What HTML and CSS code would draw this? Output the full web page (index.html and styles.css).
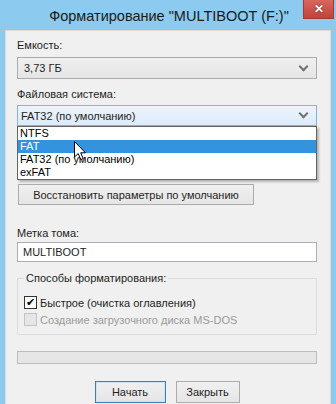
FILE: index.html
```html
<!DOCTYPE html>
<html lang="ru">
<head>
    <meta charset="UTF-8">
    <title>Форматирование</title>
    <link rel="stylesheet" href="styles.css">
</head>
<body>

<div class="window">
    <div class="titlebar">
        <span class="title">Форматирование "MULTIBOOT (F:)"</span>
        <span class="close">&#x2715;</span>
    </div>

    <div class="panel">
        <div class="label">Емкость:</div>
        <div class="combo">
            <span>3,73 ГБ</span>
            <span class="arrow"></span>
        </div>

        <div class="label">Файловая система:</div>
        <div class="combo-wrap">
            <div class="combo combo-hot">
                <span>FAT32 (по умолчанию)</span>
                <span class="arrow"></span>
            </div>
            <ul class="droplist">
                <li>NTFS</li>
                <li class="selected">FAT</li>
                <li>FAT32 (по умолчанию)</li>
                <li>exFAT</li>
            </ul>
            <svg class="cursor" width="13" height="20" viewBox="0 0 13 20">
                <path d="M0.5 0.5 L0.5 16 L4.2 12.6 L6.8 18.6 L9.2 17.6 L6.7 11.8 L11.5 11.8 Z" fill="#fff" stroke="#000" stroke-width="1"/>
            </svg>
        </div>

        <div class="btn btn-restore">Восстановить параметры по умолчанию</div>

        <div class="label label-volume">Метка тома:</div>
        <div class="textfield">MULTIBOOT</div>

        <fieldset class="group">
            <legend>Способы форматирования:</legend>
            <div class="check">
                <span class="box box-checked">&#x2714;</span>
                <span>Быстрое (очистка оглавления)</span>
            </div>
            <div class="check check-disabled">
                <span class="box"></span>
                <span>Создание загрузочного диска MS-DOS</span>
            </div>
        </fieldset>

        <div class="progress"></div>

        <div class="actions">
            <div class="btn btn-default">Начать</div>
            <div class="btn btn-close">Закрыть</div>
        </div>
    </div>
</div>

</body>
</html>
```

FILE: styles.css
```css
html, body{
    margin: 0;
    padding: 0;
}
body{
    width: 336px;
    height: 404px;
    overflow: hidden;
    font-family: "Liberation Sans", Arial, sans-serif;
    font-size: 11px;
    color: #1e1e1e;
}
.window{
    box-sizing: border-box;
    height: 404px;
    padding: 0 5px;
    background: #8ccaf0;
}
.titlebar{
    position: relative;
    height: 30px;
    display: flex;
    align-items: center;
    justify-content: center;
}
.title{
    font-size: 14.5px;
    color: #1a1a1a;
    margin-left: 2px;
    margin-top: 2px;
    white-space: nowrap;
}
.close{
    position: absolute;
    top: 0;
    right: -3px;
    width: 31px;
    height: 19px;
    background: linear-gradient(#d8675f, #c2433a);
    border: 1px solid #a23a33;
    border-top: 0;
    box-sizing: border-box;
    color: #fff;
    font-size: 12px;
    font-weight: bold;
    text-align: center;
    line-height: 18px;
    text-shadow: 0 0 2px #5a1510;
}
.panel{
    box-sizing: border-box;
    height: 374px;
    padding: 6px 13px 0 11px;
    background: #f0f0f0;
    border: 1px solid #d9d9d9;
    border-bottom: 0;
}
.label{
    line-height: 16px;
    height: 16px;
    white-space: nowrap;
}
.combo{
    box-sizing: border-box;
    height: 22px;
    margin-top: 4px;
    padding: 0 6px;
    display: flex;
    align-items: center;
    justify-content: space-between;
    border: 1px solid #acacac;
    background: linear-gradient(#f0f0f0, #e5e5e5);
}
.combo + .label{
    margin-top: 7px;
}
.combo-wrap{
    position: relative;
    margin-top: 3px;
    height: 79px;
}
.combo-wrap .combo{
    margin-top: 0;
    height: 21px;
    padding-left: 3px;
}
.combo-hot{
    border-color: #7eb4ea;
    background: linear-gradient(#ecf4fc, #dcecfc);
}
.arrow{
    width: 5px;
    height: 5px;
    margin-right: 3px;
    margin-top: -4px;
    border-right: 2px solid #707070;
    border-bottom: 2px solid #707070;
    transform: rotate(45deg);
}
.droplist{
    position: absolute;
    top: 21px;
    left: 0;
    right: 0;
    margin: 0;
    padding: 0;
    list-style: none;
    background: #fff;
    border: 1px solid #646464;
    box-shadow: 2px 2px 2px rgba(0, 0, 0, 0.25);
}
.droplist li{
    height: 13px;
    line-height: 13px;
    padding-left: 2px;
    color: #000;
    white-space: nowrap;
}
.droplist .selected{
    background: #3393df;
    color: #fff;
}
.cursor{
    position: absolute;
    left: 57px;
    top: 36px;
}
.btn{
    box-sizing: border-box;
    height: 21px;
    border: 1px solid #acacac;
    background: linear-gradient(#f0f0f0, #e5e5e5);
    display: flex;
    align-items: center;
    justify-content: center;
    white-space: nowrap;
}
.btn-restore{
    width: 236px;
    margin-left: 1px;
}
.label-volume{
    margin-top: 20px;
}
.textfield{
    box-sizing: border-box;
    height: 20px;
    margin-top: 1px;
    padding: 0 5px;
    display: flex;
    align-items: center;
    background: #fff;
    border: 1px solid #abadb3;
}
.group{
    margin: 8px 0 0;
    padding: 8px 0 11px 6px;
    border: 1px solid #dcdcdc;
    height: 44px;
}
.group legend{
    padding: 0 2px;
    margin-left: 0;
    line-height: 16px;
}
.check{
    display: flex;
    align-items: center;
    height: 17px;
    gap: 3px;
    white-space: nowrap;
}
.box{
    box-sizing: border-box;
    width: 13px;
    height: 13px;
    border: 1px solid #333;
    background: #fff;
    font-size: 11px;
    line-height: 11px;
    text-align: center;
    color: #000;
}
.check-disabled{
    color: #9a9a9a;
}
.check-disabled .box{
    border-color: #c4c4c4;
    background: #e6e6e6;
}
.progress{
    box-sizing: border-box;
    height: 13px;
    margin-top: 16px;
    border: 1px solid #bcbcbc;
    background: #e6e6e6;
}
.actions{
    display: flex;
    justify-content: center;
    gap: 10px;
    margin-top: 17px;
}
.btn-default{
    width: 71px;
    height: 22px;
    border-color: #3c7fb1;
    box-shadow: inset 0 0 0 1px #cfe3f4;
}
.btn-close{
    width: 64px;
    height: 22px;
}
```
